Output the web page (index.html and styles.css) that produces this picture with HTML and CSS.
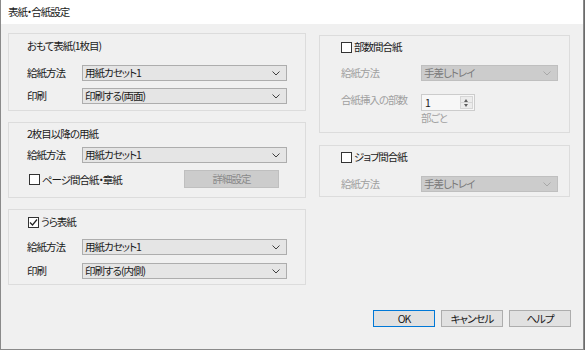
FILE: index.html
```html
<!DOCTYPE html>
<html lang="ja">
<head>
    <meta charset="UTF-8">
    <meta name="viewport" content="width=device-width, initial-scale=1.0">
    <title>表紙・合紙設定</title>
    <link rel="stylesheet" href="styles.css">
</head>
<body>
    <div class="window">
        <div class="titlebar">表紙・合紙設定</div>

        <div class="dialog">
            <div class="columns">
                <!-- Left column -->
                <div class="col-left">
                    <section class="group group-front">
                        <div class="group-title">おもて表紙(1枚目)</div>
                        <div class="rows">
                            <div class="row">
                                <span class="label">給紙方法</span>
                                <div class="select">
                                    <span class="select-value">用紙カセット1</span>
                                    <svg class="chevron" width="8" height="5" viewBox="0 0 8 5"><polyline points="0.5,0.5 4,4 7.5,0.5" fill="none" stroke="#404040" stroke-width="1"/></svg>
                                </div>
                            </div>
                            <div class="row">
                                <span class="label">印刷</span>
                                <div class="select">
                                    <span class="select-value">印刷する(両面)</span>
                                    <svg class="chevron" width="8" height="5" viewBox="0 0 8 5"><polyline points="0.5,0.5 4,4 7.5,0.5" fill="none" stroke="#404040" stroke-width="1"/></svg>
                                </div>
                            </div>
                        </div>
                    </section>

                    <section class="group group-rest">
                        <div class="group-title">2枚目以降の用紙</div>
                        <div class="rows">
                            <div class="row">
                                <span class="label">給紙方法</span>
                                <div class="select">
                                    <span class="select-value">用紙カセット1</span>
                                    <svg class="chevron" width="8" height="5" viewBox="0 0 8 5"><polyline points="0.5,0.5 4,4 7.5,0.5" fill="none" stroke="#404040" stroke-width="1"/></svg>
                                </div>
                            </div>
                            <div class="row row-option">
                                <label class="check">
                                    <span class="check-box"></span>
                                    <span>ページ間合紙・章紙</span>
                                </label>
                                <button class="button button-disabled">詳細設定</button>
                            </div>
                        </div>
                    </section>

                    <section class="group group-back">
                        <label class="check group-title">
                            <span class="check-box">
                                <svg width="9" height="9" viewBox="0 0 9 9"><polyline points="1,4.5 3.5,7 8,1.5" fill="none" stroke="#222" stroke-width="1.2"/></svg>
                            </span>
                            <span>うら表紙</span>
                        </label>
                        <div class="rows rows-wide">
                            <div class="row">
                                <span class="label">給紙方法</span>
                                <div class="select">
                                    <span class="select-value">用紙カセット1</span>
                                    <svg class="chevron" width="8" height="5" viewBox="0 0 8 5"><polyline points="0.5,0.5 4,4 7.5,0.5" fill="none" stroke="#404040" stroke-width="1"/></svg>
                                </div>
                            </div>
                            <div class="row">
                                <span class="label">印刷</span>
                                <div class="select">
                                    <span class="select-value">印刷する(内側)</span>
                                    <svg class="chevron" width="8" height="5" viewBox="0 0 8 5"><polyline points="0.5,0.5 4,4 7.5,0.5" fill="none" stroke="#404040" stroke-width="1"/></svg>
                                </div>
                            </div>
                        </div>
                    </section>
                </div>

                <!-- Right column -->
                <div class="col-right">
                    <section class="group group-sets">
                        <label class="check group-title">
                            <span class="check-box"></span>
                            <span>部数間合紙</span>
                        </label>
                        <div class="row row-right">
                            <span class="label label-disabled">給紙方法</span>
                            <div class="select select-disabled">
                                <span class="select-value">手差しトレイ</span>
                                <svg class="chevron" width="8" height="5" viewBox="0 0 8 5"><polyline points="0.5,0.5 4,4 7.5,0.5" fill="none" stroke="#a8a8a8" stroke-width="1"/></svg>
                            </div>
                        </div>
                        <div class="row row-right row-spin">
                            <span class="label label-disabled label-spin">合紙挿入の部数</span>
                            <div class="spin-wrap">
                                <div class="spin">
                                    <span class="spin-value">1</span>
                                    <div class="spin-buttons">
                                        <span class="spin-up"></span>
                                        <span class="spin-down"></span>
                                    </div>
                                </div>
                                <span class="label-disabled spin-unit">部ごと</span>
                            </div>
                        </div>
                    </section>

                    <section class="group group-job">
                        <label class="check group-title">
                            <span class="check-box"></span>
                            <span>ジョブ間合紙</span>
                        </label>
                        <div class="row row-right">
                            <span class="label label-disabled">給紙方法</span>
                            <div class="select select-disabled">
                                <span class="select-value">手差しトレイ</span>
                                <svg class="chevron" width="8" height="5" viewBox="0 0 8 5"><polyline points="0.5,0.5 4,4 7.5,0.5" fill="none" stroke="#a8a8a8" stroke-width="1"/></svg>
                            </div>
                        </div>
                    </section>
                </div>
            </div>

            <div class="footer">
                <button class="button button-default">OK</button>
                <button class="button">キャンセル</button>
                <button class="button">ヘルプ</button>
            </div>
        </div>
    </div>
</body>
</html>
```

FILE: styles.css
```css
:root {
    --dialog-bg: #f0f0f0;
    --group-border: #dcdcdc;
    --control-bg: #e5e5e5;
    --control-border: #adadad;
    --disabled-bg: #cccccc;
    --disabled-border: #bfbfbf;
    --disabled-text: #a0a0a0;
    --text: #1a1a1a;
    --accent: #0078d7;
}

* {
    margin: 0;
    padding: 0;
    box-sizing: border-box;
}

body {
    width: 585px;
    height: 350px;
    background-color: #6b6b6b;
    font-family: "Noto Sans CJK JP", "Noto Sans", sans-serif;
    font-size: 10.5px;
    letter-spacing: -1px;
    font-feature-settings: "palt";
    color: var(--text);
    overflow: hidden;
}

.window {
    width: 584px;
    height: 350px;
    background-color: var(--dialog-bg);
    border: 1px solid #8a8a8a;
    border-top: none;
    display: flex;
    flex-direction: column;
}

.titlebar {
    height: 24px;
    background-color: #fff;
    padding-left: 7px;
    line-height: 24px;
}

.dialog {
    padding: 9px 12px 0 7px;
    display: flex;
    flex-direction: column;
}

.columns {
    display: flex;
    gap: 13px;
}

.col-left {
    width: 298px;
    display: flex;
    flex-direction: column;
    gap: 11px;
}

.col-right {
    width: 251px;
    margin-top: 2px;
    display: flex;
    flex-direction: column;
    gap: 12px;
}

/* Group boxes */
.group {
    border: 1px solid var(--group-border);
    padding: 5px 18px 6px 18px;
}

.group-title {
    line-height: 14px;
    display: flex;
    align-items: center;
}

.group-front .group-title {
    margin-bottom: 12px;
}

.group-rest {
    padding-top: 4px;
    padding-bottom: 9px;
}

.group-rest .group-title {
    margin-bottom: 6px;
}

.group-back {
    padding-bottom: 5px;
}

.group-back .group-title {
    margin-left: 1px;
    margin-bottom: 10px;
}

.rows {
    display: flex;
    flex-direction: column;
    gap: 7px;
}

.rows-wide {
    gap: 8px;
}

.row {
    display: flex;
    align-items: center;
}

.label {
    width: 55px;
    line-height: 14px;
}

.label-disabled {
    color: var(--disabled-text);
}

/* Dropdowns */
.select {
    width: 205px;
    height: 16px;
    background-color: var(--control-bg);
    border: 1px solid var(--control-border);
    display: flex;
    align-items: center;
    justify-content: space-between;
    padding: 0 6px 0 2px;
}

.select-value {
    line-height: 14px;
}

.select-disabled {
    width: 137px;
    background-color: var(--disabled-bg);
    border-color: var(--disabled-border);
    color: #7a7a7a;
}

/* Checkboxes */
.check {
    display: flex;
    align-items: center;
    gap: 2px;
}

.check-box {
    width: 11px;
    height: 11px;
    border: 1px solid #333;
    background-color: #fff;
    display: flex;
    align-items: center;
    justify-content: center;
}

.row-option {
    justify-content: space-between;
    padding-left: 2px;
    padding-right: 8px;
}

/* Buttons */
.button {
    font-family: inherit;
    font-size: 10.5px;
    letter-spacing: -1px;
    font-feature-settings: "palt";
    color: var(--text);
    background-color: #e1e1e1;
    border: 1px solid var(--control-border);
    width: 62px;
    height: 17px;
    line-height: 14px;
}

.button-disabled {
    width: 95px;
    height: 18px;
    background-color: var(--disabled-bg);
    border-color: var(--disabled-border);
    color: #8a8a8a;
}

.button-default {
    border-color: var(--accent);
}

/* Right column groups */
.group-sets {
    padding: 4px 11px 7px 21px;
}

.group-sets .group-title {
    margin-bottom: 11px;
}

.group-job {
    padding: 4px 11px 4px 21px;
}

.group-job .group-title {
    margin-bottom: 12px;
}

.row-right .label {
    width: 80px;
}

.row-spin {
    margin-top: 13px;
    align-items: flex-start;
}

.label-spin {
    line-height: 12px;
}

.spin-wrap {
    display: flex;
    flex-direction: column;
}

.spin {
    width: 54px;
    height: 17px;
    border: 1px solid #cccccc;
    background-color: #f7f7f7;
    display: flex;
    justify-content: space-between;
}

.spin-value {
    padding-left: 3px;
    line-height: 15px;
}

.spin-buttons {
    width: 13px;
    margin: 1px 1px 1px 0;
    border: 1px solid #d6d6d6;
    background-color: #ececec;
    display: flex;
    flex-direction: column;
}

.spin-up,
.spin-down {
    flex: 1;
    position: relative;
}

.spin-up::after,
.spin-down::after {
    content: "";
    position: absolute;
    left: 3px;
    top: 2px;
    border-left: 2.5px solid transparent;
    border-right: 2.5px solid transparent;
}

.spin-up {
    border-bottom: 1px solid #d6d6d6;
}

.spin-up::after {
    border-bottom: 3px solid #606060;
}

.spin-down::after {
    top: 1px;
    border-top: 3px solid #606060;
}

.spin-unit {
    line-height: 14px;
}

/* Footer */
.footer {
    margin-top: 25px;
    display: flex;
    justify-content: flex-end;
    gap: 6px;
}
```
